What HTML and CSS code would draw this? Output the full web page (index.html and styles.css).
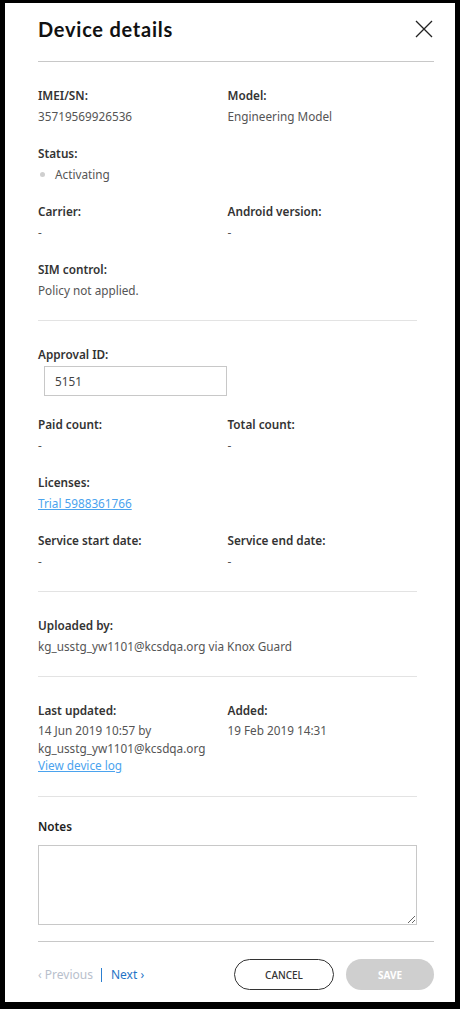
FILE: index.html
```html
<!DOCTYPE html>
<html>
<head>
<meta charset="utf-8">
<link rel="stylesheet" href="styles.css">
</head>
<body>
<div class="modal">
  <div class="header">
    <h1 class="title">Device details</h1>
    <button class="close" aria-label="Close">
      <svg width="18" height="18" viewBox="0 0 18 18"><path d="M1 1 L17 17 M17 1 L1 17" stroke="#222" stroke-width="1.3" fill="none"/></svg>
    </button>
  </div>
  <div class="body">
    <div class="section grid">
      <div class="field"><div class="label">IMEI/SN:</div><div class="value">35719569926536</div></div>
      <div class="field"><div class="label">Model:</div><div class="value">Engineering Model</div></div>
      <div class="field full"><div class="label">Status:</div><div class="value status"><span class="dot"></span>Activating</div></div>
      <div class="field"><div class="label">Carrier:</div><div class="value">-</div></div>
      <div class="field"><div class="label">Android version:</div><div class="value">-</div></div>
      <div class="field full"><div class="label">SIM control:</div><div class="value">Policy not applied.</div></div>
    </div>
    <div class="section">
      <div class="label">Approval ID:</div>
      <input class="input" type="text" value="5151">
      <div class="grid after-input">
        <div class="field"><div class="label">Paid count:</div><div class="value">-</div></div>
        <div class="field"><div class="label">Total count:</div><div class="value">-</div></div>
        <div class="field full"><div class="label">Licenses:</div><div class="value"><a class="link" href="#">Trial 5988361766</a></div></div>
        <div class="field"><div class="label">Service start date:</div><div class="value">-</div></div>
        <div class="field"><div class="label">Service end date:</div><div class="value">-</div></div>
      </div>
    </div>
    <div class="section">
      <div class="field"><div class="label">Uploaded by:</div><div class="value">kg_usstg_yw1101@kcsdqa.org via Knox Guard</div></div>
    </div>
    <div class="section grid">
      <div class="field"><div class="label">Last updated:</div><div class="value multi">14 Jun 2019 10:57 by<br>kg_usstg_yw1101@kcsdqa.org<br><a class="link" href="#">View device log</a></div></div>
      <div class="field"><div class="label">Added:</div><div class="value multi">19 Feb 2019 14:31</div></div>
    </div>
    <div class="section last">
      <div class="label notes-label">Notes</div>
      <textarea class="notes"></textarea>
    </div>
  </div>
  <div class="footer">
    <div class="pager">
      <span class="prev">&lsaquo; Previous</span>
      <span class="sep"></span>
      <a class="next" href="#">Next &rsaquo;</a>
    </div>
    <div class="actions">
      <button class="btn cancel">CANCEL</button>
      <button class="btn save">SAVE</button>
    </div>
  </div>
</div>
</body>
</html>
```

FILE: styles.css
```css
html, body {
  margin: 0;
  padding: 0;
  background: #000;
}
body {
  font-family: "Noto Sans", "Liberation Sans", sans-serif;
  font-size: 11.75px;
  color: #555;
}
.modal {
  background: #fff;
  width: 450px;
  height: 999px;
  margin: 3px 0 0 5px;
  display: flex;
  flex-direction: column;
  box-sizing: border-box;
}
.header {
  margin: 0 21px 0 33px;
  border-bottom: 1px solid #c8c8c8;
  display: flex;
  align-items: center;
  justify-content: space-between;
  padding-bottom: 6px;
  height: 52px;
}
.title {
  margin: 0;
  font-family: Lato, "Open Sans", sans-serif;
  font-weight: 700;
  font-size: 20px;
  color: #111;
  letter-spacing: 0.75px;
}
.close {
  background: none;
  border: 0;
  padding: 0;
  width: 18px;
  height: 18px;
  margin-right: 1px;
  cursor: pointer;
  display: flex;
}
.body {
  padding: 0 38px 0 33px;
  flex: 1;
}
.section {
  padding: 24px 0 21px;
  border-bottom: 1px solid #e3e3e3;
}
.section.last {
  border-bottom: 0;
  padding: 20px 0 0;
}
.grid {
  display: grid;
  grid-template-columns: 1fr 1fr;
  row-gap: 19px;
}
.full {
  grid-column: 1 / -1;
}
.label {
  font-weight: 600;
  color: #333;
  line-height: 18px;
  margin-bottom: 3px;
}
.value {
  line-height: 18px;
  color: #555;
}
.value.multi {
  line-height: 17.5px;
}
.status {
  display: flex;
  align-items: center;
}
.dot {
  width: 5px;
  height: 5px;
  border-radius: 50%;
  background: #cfcfcf;
  margin: 0 10px 0 2px;
}
.link {
  color: #4ba3ee;
  text-decoration: underline;
}
.input {
  display: block;
  margin: 1px 0 0 6px;
  width: 183px;
  height: 30px;
  box-sizing: border-box;
  border: 1px solid #c8c8c8;
  padding: 0 10px;
  font: inherit;
  color: #444;
  outline: none;
}
.after-input {
  margin-top: 19px;
}
.notes-label {
  color: #222;
  margin-bottom: 10px;
}
.notes {
  display: block;
  width: 100%;
  height: 80px;
  box-sizing: border-box;
  border: 1px solid #c8c8c8;
  margin: 0 0 1px;
  font: inherit;
}
.footer {
  margin: 0 21px 0 33px;
  border-top: 1px solid #c8c8c8;
  padding: 17px 0 12px;
  display: flex;
  align-items: center;
  justify-content: space-between;
}
.pager {
  display: flex;
  align-items: center;
  font-size: 12px;
}
.prev {
  color: #b8c0cc;
}
.sep {
  width: 1px;
  height: 14px;
  background: #2c7fd0;
  margin: 0 9px 0 8px;
}
.next {
  color: #1f74c6;
  text-decoration: none;
}
.actions {
  display: flex;
  gap: 12px;
}
.btn {
  height: 31px;
  border-radius: 16px;
  font-family: "Noto Sans", "Liberation Sans", sans-serif;
  font-size: 10px;
  font-weight: 500;
  padding: 0;
  cursor: pointer;
}
.cancel {
  width: 100px;
  background: #fff;
  border: 1px solid #333;
  color: #333;
}
.save {
  width: 88px;
  background: #cfcfcf;
  border: 0;
  color: #fff;
  font-weight: 700;
}
```
